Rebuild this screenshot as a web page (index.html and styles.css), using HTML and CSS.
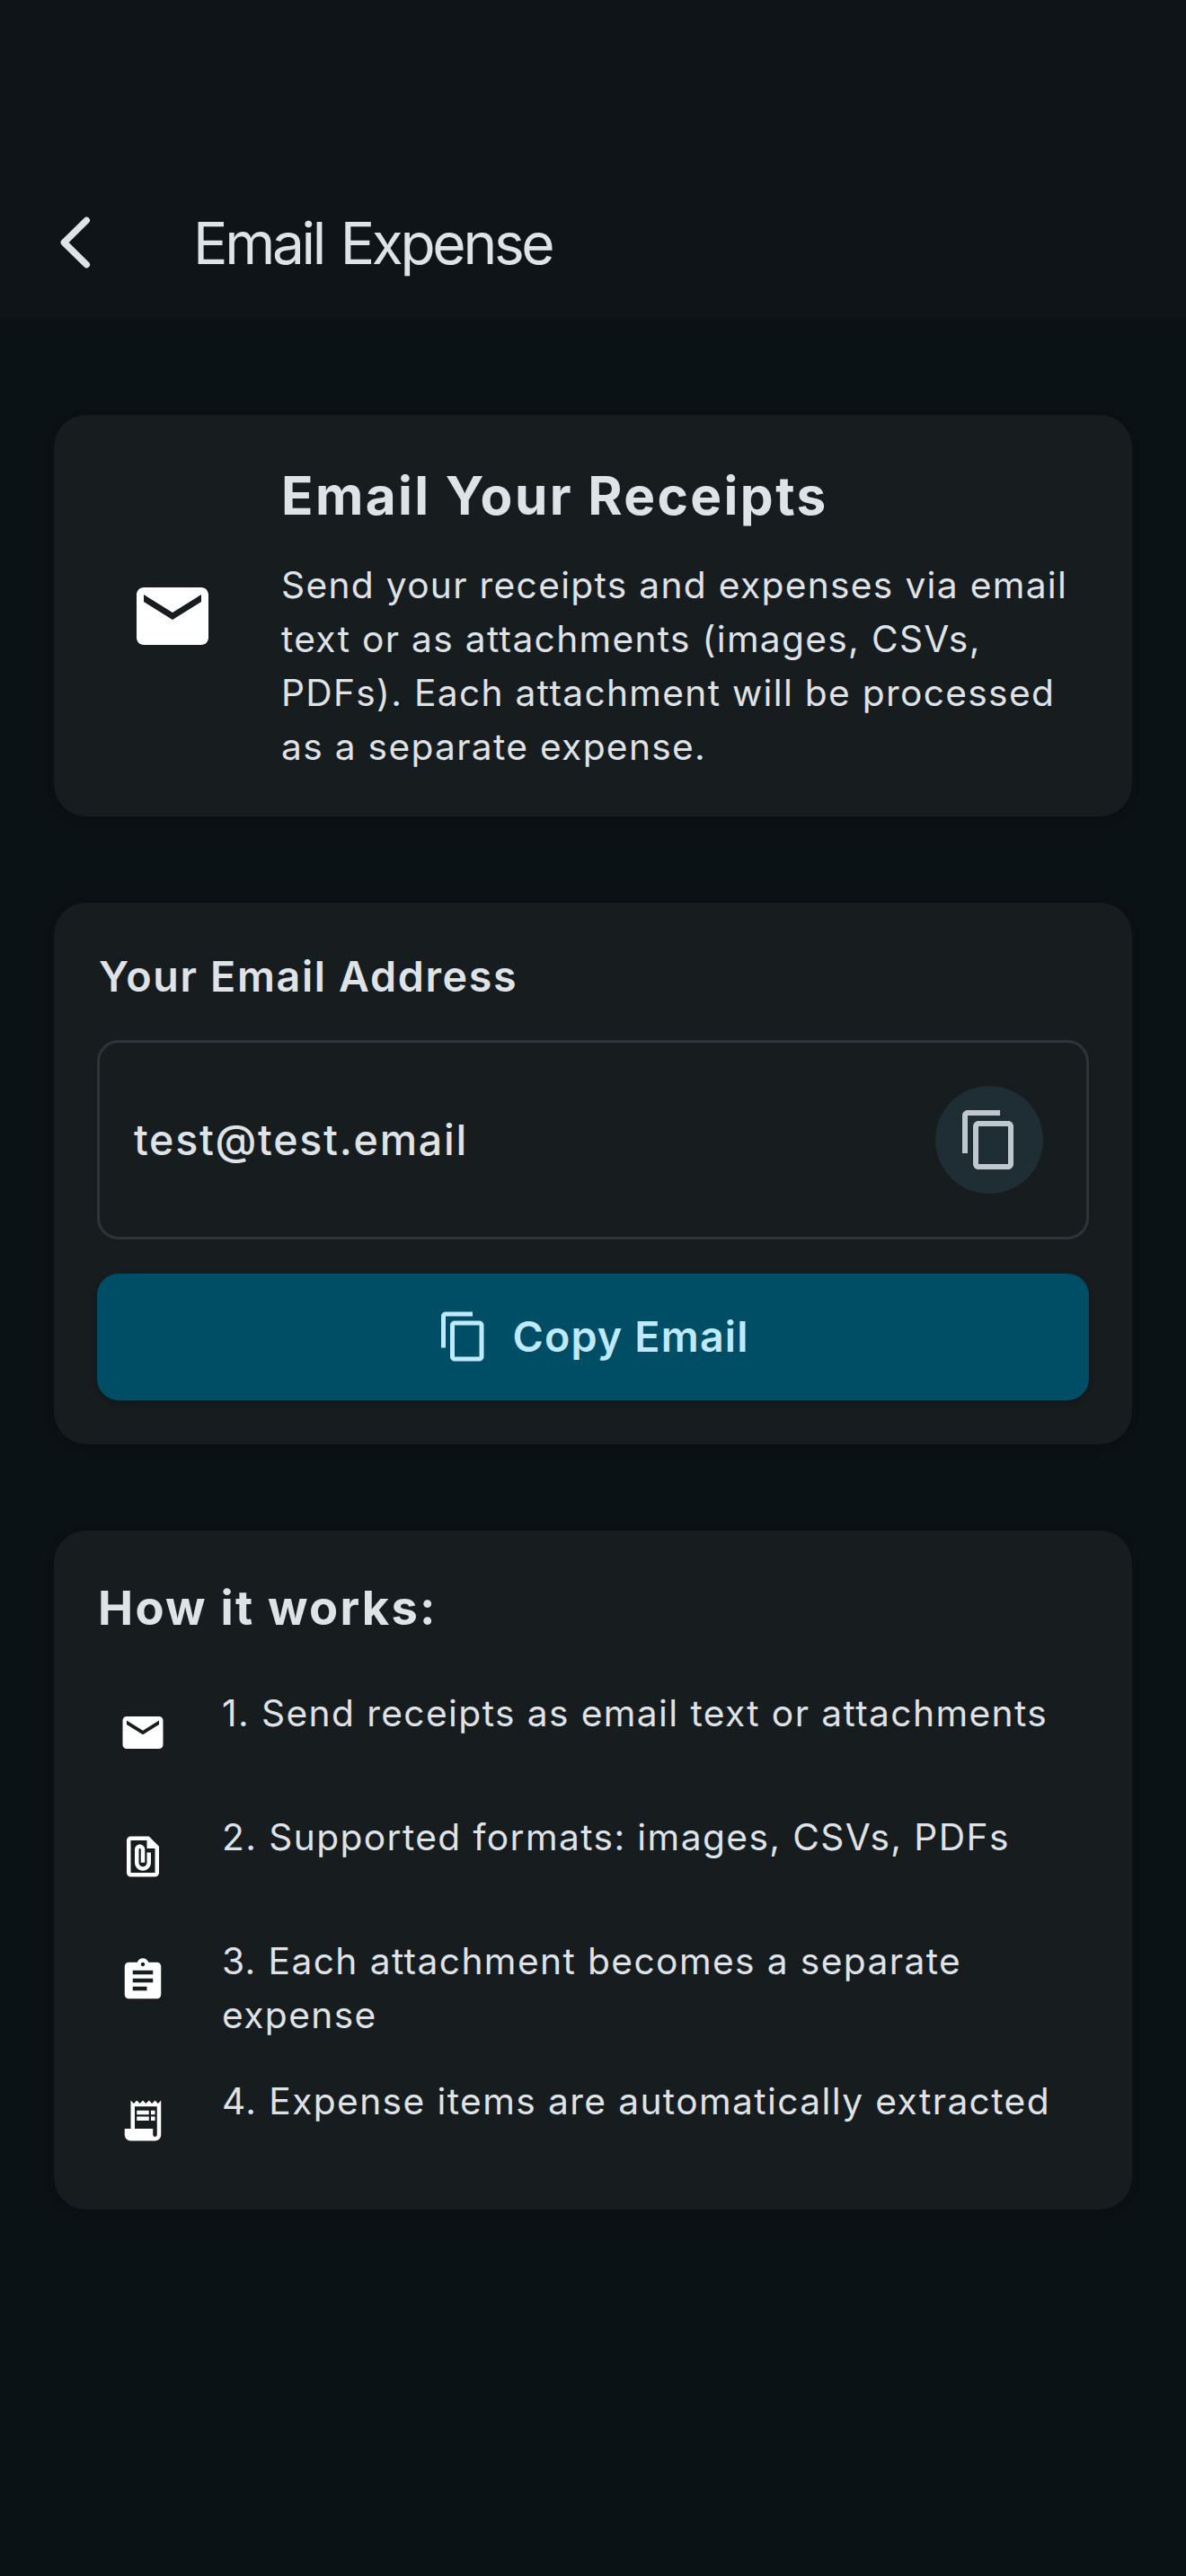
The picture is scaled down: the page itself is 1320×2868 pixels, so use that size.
FILE: index.html
```html
<!DOCTYPE html>
<html lang="en">
<head>
<meta charset="utf-8">
<title>Email Expense</title>
<link rel="stylesheet" href="styles.css">
</head>
<body>
<svg class="sprite" aria-hidden="true">
  <symbol id="mail" viewBox="0 0 24 24"><path d="M20 4H4c-1.1 0-2 .9-2 2v12c0 1.1.9 2 2 2h16c1.1 0 2-.9 2-2V6c0-1.1-.9-2-2-2zm0 4l-8 5-8-5V6l8 5 8-5v2z"/></symbol>
  <symbol id="copy" viewBox="0 0 24 24"><path d="M16 1H4c-1.1 0-2 .9-2 2v14h2V3h12V1zm3 4H8c-1.1 0-2 .9-2 2v14c0 1.1.9 2 2 2h11c1.1 0 2-.9 2-2V7c0-1.1-.9-2-2-2zm0 16H8V7h11v14z"/></symbol>
  <symbol id="file" viewBox="0 0 24 24"><path d="M15 2H6c-1.1 0-2 .9-2 2v16c0 1.1.9 2 2 2h12c1.1 0 2-.9 2-2V7l-5-5zM6 20V4h8v4h4v12H6z" fill-rule="evenodd"/><path d="M16 10v5c0 2.21-1.79 4-4 4s-4-1.79-4-4V8.5C8 7.12 9.12 6 10.5 6S13 7.12 13 8.5V15h-2V8.5c0-.28-.22-.5-.5-.5s-.5.22-.5.5V15c0 1.1.9 2 2 2s2-.9 2-2v-5h2z"/></symbol>
  <symbol id="assignment" viewBox="0 0 24 24"><path d="M19 3h-4.18C14.4 1.84 13.3 1 12 1c-1.3 0-2.4.84-2.82 2H5c-1.1 0-2 .9-2 2v14c0 1.1.9 2 2 2h14c1.1 0 2-.9 2-2V5c0-1.1-.9-2-2-2zm-7 0c.55 0 1 .45 1 1s-.45 1-1 1-1-.45-1-1 .45-1 1-1zm2 14H7v-2h7v2zm3-4H7v-2h10v2zm0-4H7V7h10v2z"/></symbol>
  <symbol id="receipt" viewBox="0 0 24 24"><path fill-rule="evenodd" d="M19.5 3.5L18 2l-1.5 1.5L15 2l-1.5 1.5L12 2l-1.5 1.5L9 2 7.5 3.5 6 2v14H3v3c0 1.66 1.34 3 3 3h12c1.66 0 3-1.34 3-3V2l-1.5 1.5zM19 19c0 .55-.45 1-1 1s-1-.45-1-1v-3H8V5h11v14z"/><path d="M9 7h6v2H9zM16 7h2v2h-2zM9 10h6v2H9zM16 10h2v2h-2z"/></symbol>
</svg>

<header class="app-bar">
  <svg class="back" viewBox="0 0 42 66"><path d="M33.3 7.3L8.3 32l25 24.7"/></svg>
  <h1 class="title">Email Expense</h1>
</header>

<main class="content">
  <section class="card intro">
    <div class="intro-icon"><svg class="icon-xl"><use href="#mail"/></svg></div>
    <div class="intro-text">
      <h2 class="intro-title">Email Your Receipts</h2>
      <p class="body">Send your receipts and expenses via email<br>text or as attachments (images, CSVs,<br>PDFs). Each attachment will be processed<br>as a separate expense.</p>
    </div>
  </section>

  <section class="card address">
    <h3 class="label">Your Email Address</h3>
    <div class="field">
      <span class="email">test@test.email</span>
      <button class="round"><svg class="icon-lg"><use href="#copy"/></svg></button>
    </div>
    <button class="primary"><svg class="icon-md"><use href="#copy"/></svg><span>Copy Email</span></button>
  </section>

  <section class="card how">
    <h3 class="how-title">How it works:</h3>
    <ul class="steps">
      <li class="step"><span class="step-icon"><svg class="icon-sm"><use href="#mail"/></svg></span><p class="body">1. Send receipts as email text or attachments</p></li>
      <li class="step"><span class="step-icon"><svg class="icon-sm"><use href="#file"/></svg></span><p class="body">2. Supported formats: images, CSVs, PDFs</p></li>
      <li class="step"><span class="step-icon"><svg class="icon-sm"><use href="#assignment"/></svg></span><p class="body">3. Each attachment becomes a separate<br>expense</p></li>
      <li class="step"><span class="step-icon"><svg class="icon-sm"><use href="#receipt"/></svg></span><p class="body">4. Expense items are automatically extracted</p></li>
    </ul>
  </section>
</main>
</body>
</html>
```
FILE: styles.css
```css
* { box-sizing: border-box; margin: 0; padding: 0; }

body {
  min-height: 2868px;
  background: #0b1215;
  color: #dfe2e7;
  font-family: Inter, "Liberation Sans", sans-serif;
}

button { border: 0; font: inherit; color: inherit; }
svg { display: block; flex: none; fill: currentColor; }
.sprite { display: none; }

.app-bar {
  display: flex;
  align-items: center;
  height: 354px;
  padding: 187px 63px 0;
  background: #0f1418;
}
.back {
  width: 42px;
  height: 66px;
  margin-right: 110px;
  fill: none;
  stroke: currentColor;
  stroke-width: 7.4;
  stroke-linecap: round;
  stroke-linejoin: round;
}
.title {
  font-size: 64px;
  font-weight: 400;
  line-height: 84px;
  letter-spacing: -3.3px;
  word-spacing: 4px;
}

.content {
  display: flex;
  flex-direction: column;
  gap: 96px;
  padding: 108px 60px 0;
}
.card {
  padding: 48px;
  border-radius: 36px;
  background: #171c1f;
  box-shadow: 0 3px 8px rgba(0, 0, 0, .22);
}

.intro {
  display: flex;
  gap: 37px;
  height: 447px;
}
.intro-icon {
  display: flex;
  align-items: center;
  justify-content: center;
  width: 168px;
  color: #fff;
}
.icon-xl { width: 96px; height: 96px; }
.intro-title {
  margin-bottom: 28px;
  font-size: 58.5px;
  font-weight: 700;
  line-height: 84px;
  letter-spacing: 2.4px;
}
.body {
  font-size: 40.7px;
  line-height: 60px;
  letter-spacing: 1.4px;
  white-space: nowrap;
}
.intro .body { letter-spacing: 1.31px; }

.address { height: 603px; }
.label {
  margin-bottom: 37px;
  padding-left: 2px;
  font-size: 46.6px;
  font-weight: 600;
  line-height: 68px;
  letter-spacing: 1.66px;
}
.field {
  display: flex;
  align-items: center;
  justify-content: space-between;
  height: 222px;
  margin-bottom: 37.5px;
  padding: 0 48px 0 38px;
  border: 3px solid #303338;
  border-radius: 24px;
}
.email {
  font-size: 46.6px;
  font-weight: 500;
  letter-spacing: 1.72px;
}
.round {
  display: grid;
  place-items: center;
  width: 120px;
  height: 120px;
  border-radius: 50%;
  background: #1f2d34;
  color: #bfc8cf;
}
.icon-lg { width: 72px; height: 72px; }
.primary {
  display: flex;
  align-items: center;
  justify-content: center;
  gap: 24px;
  width: 100%;
  height: 141px;
  border-radius: 24px;
  background: #004e65;
  color: #bee9ff;
  font-size: 46.6px;
  font-weight: 600;
  letter-spacing: 1.18px;
  box-shadow: 0 3px 6px rgba(0, 0, 0, .25);
}
.icon-md { width: 60px; height: 60px; }

.how { height: 756px; }
.how-title {
  margin-bottom: 50px;
  padding-left: 1px;
  font-size: 52.4px;
  font-weight: 700;
  line-height: 76px;
  letter-spacing: 2.24px;
}
.steps {
  display: flex;
  flex-direction: column;
  gap: 36px;
  list-style: none;
}
.step {
  display: flex;
  align-items: flex-start;
  gap: 37px;
}
.step-icon {
  padding: 24px;
  color: #fff;
}
.icon-sm { width: 54px; height: 54px; }
```
